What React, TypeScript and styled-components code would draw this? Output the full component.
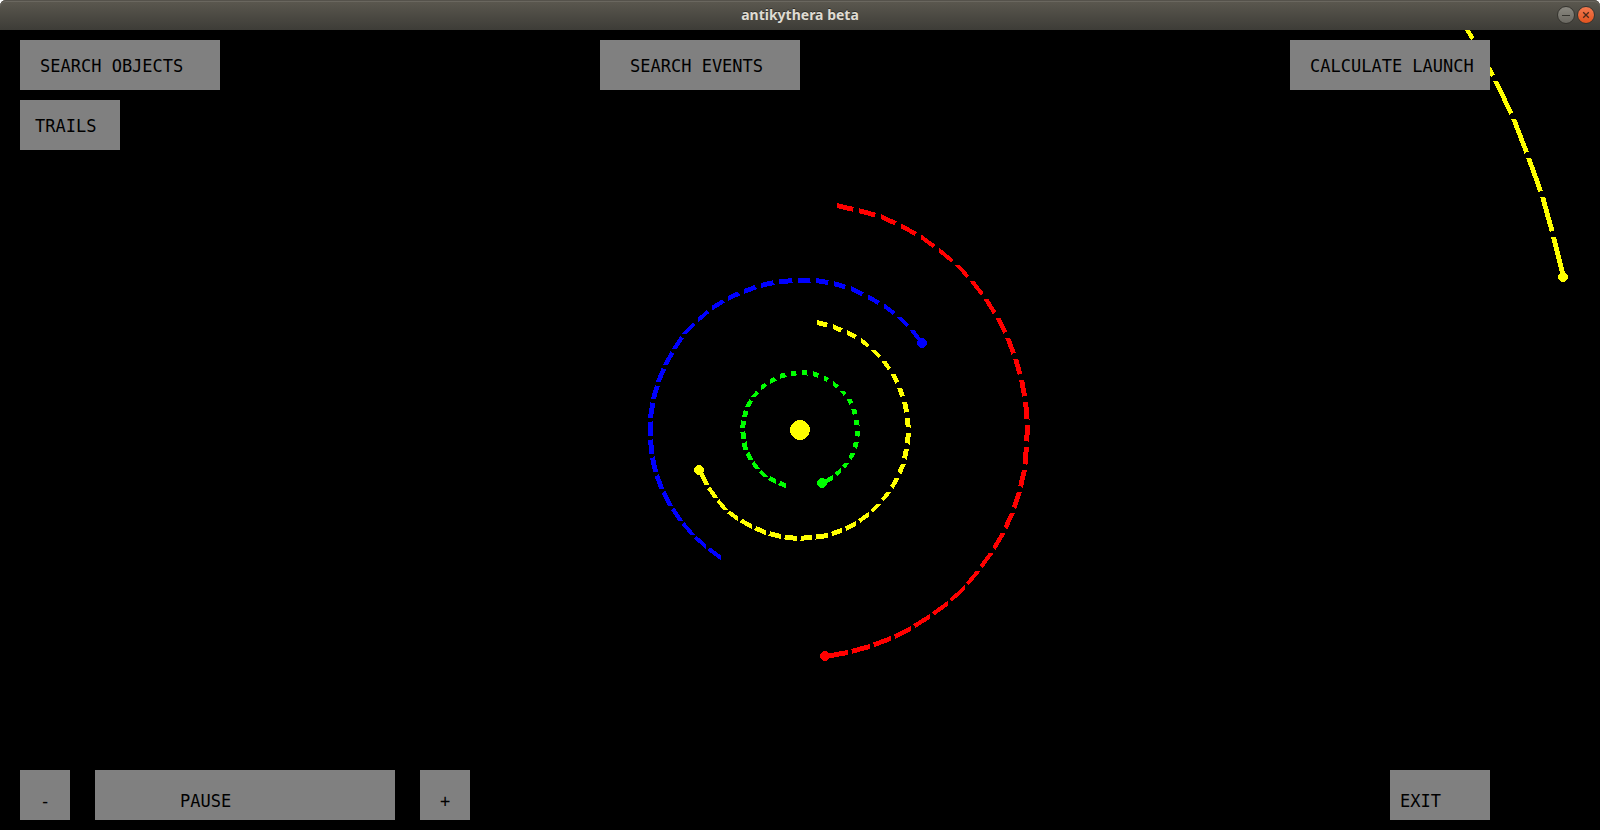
import React from "react";
import styled, { createGlobalStyle } from "styled-components";

const GlobalStyle = createGlobalStyle`
  html, body { margin: 0; background: #fff; }
  * { box-sizing: border-box; }
`;

const Window = styled.div`
  display: flex;
  flex-direction: column;
  min-height: 100vh;
`;

const TitleBar = styled.header`
  display: grid;
  grid-template-columns: 1fr auto 1fr;
  align-items: center;
  height: 30px;
  padding: 0 5px;
  border-radius: 6px 6px 0 0;
  background: linear-gradient(#5c5950, #3d3c37);
  box-shadow: inset 0 1px #55524b, inset 0 2px #6a675f;
`;

const Title = styled.h1`
  grid-column: 2;
  margin: 0;
  font: bold 14px/20px "Noto Sans", sans-serif;
  color: #dfdbd2;
  text-shadow: 0 -1px #2f2e2a;
`;

const WindowControls = styled.div`
  display: flex;
  justify-content: flex-end;
  gap: 2px;
`;

const ControlButton = styled.button<{ $close?: boolean }>`
  display: flex;
  align-items: center;
  justify-content: center;
  width: 18px;
  height: 18px;
  padding: 0;
  border: 1px solid #35342f;
  border-radius: 50%;
  background: ${(p) =>
    p.$close ? "linear-gradient(#f37a50, #e2531f)" : "linear-gradient(#8a8880, #6a6861)"};
`;

const Stage = styled.main`
  position: relative;
  flex: 1;
  display: flex;
  flex-direction: column;
  justify-content: space-between;
  gap: 20px;
  padding: 10px 110px 10px 20px;
  overflow: hidden;
  background: #000;
`;

const Sky = styled.svg`
  position: absolute;
  inset: 0;
  width: 100%;
  height: 100%;
`;

const TopControls = styled.div`
  position: relative;
  display: grid;
  grid-template-columns: 58fr 69fr 200px;
  row-gap: 10px;
`;

const BottomControls = styled.div`
  position: relative;
  display: flex;
  gap: 25px;
`;

const Key = styled.button<{ $width: number; $indent: number; $low?: boolean; $end?: boolean }>`
  width: ${(p) => p.$width}px;
  height: 50px;
  padding: ${(p) => (p.$low ? 21 : 16)}px 0 0 ${(p) => p.$indent}px;
  margin-left: ${(p) => (p.$end ? "auto" : 0)};
  display: flex;
  align-items: flex-start;
  border: 0;
  border-radius: 0;
  background: #808080;
  color: #000;
  font: 17px/20px "DejaVu Sans Mono", monospace;
  white-space: nowrap;
`;

type Point = [number, number];

interface Orbit {
  name: string;
  color: string;
  radius: number;
  from: number;
  to: number;
}

const SUN: Point = [800, 400];
const STEPS = 29;
const STROKE = 5;

// Angles in degrees, counter-clockwise from the positive x axis.
const orbits: Orbit[] = [
  { name: "Mercury", color: "#00ff00", radius: 57.5, from: 255.5, to: -67.2 },
  { name: "Venus", color: "#ffff00", radius: 108.5, from: 81, to: -157.9 },
  { name: "Earth", color: "#0000ff", radius: 150, from: 238, to: 35.2 },
  { name: "Mars", color: "#ff0000", radius: 227.6, from: 80.7, to: -83.5 },
  { name: "Jupiter", color: "#ffff00", radius: 778.3, from: 100.4, to: 11.3 },
];

function trailPoints({ radius, from, to }: Orbit): Point[] {
  return Array.from({ length: STEPS + 1 }, (_, i) => {
    const a = ((from + ((to - from) * i) / STEPS) * Math.PI) / 180;
    return [
      Math.floor(SUN[0] + radius * Math.cos(a)),
      Math.floor(SUN[1] - radius * Math.sin(a)),
    ] as Point;
  });
}

// A thick line whose ends are cut along the axis it runs across.
function segment([x0, y0]: Point, [x1, y1]: Point): string {
  const h = STROKE / 2;
  const wide = Math.abs(x1 - x0) > Math.abs(y1 - y0);
  const [ax, ay, bx, by] = [x0 + 0.5, y0 + 0.5, x1 + 0.5, y1 + 0.5];
  const [ox, oy] = wide ? [0, h] : [h, 0];
  return `${ax - ox},${ay - oy} ${bx - ox},${by - oy} ${bx + ox},${by + oy} ${ax + ox},${ay + oy}`;
}

// Small discs are plotted as a pointed octagon.
function disc([x, y]: Point, r: number): string {
  const d = r * 0.64;
  const corners = [
    [r, -1], [r, 1], [d, d], [1, r], [-1, r], [-d, d],
    [-r, 1], [-r, -1], [-d, -d], [-1, -r], [1, -r], [d, -d],
  ];
  return corners.map(([dx, dy]) => `${x + dx},${y + dy}`).join(" ");
}

function Trail({ orbit }: { orbit: Orbit }) {
  const points = trailPoints(orbit);
  return (
    <g fill={orbit.color}>
      {points.slice(1).map((p, i) => (
        <React.Fragment key={i}>
          <polygon points={segment(points[i], p)} />
          {i < STEPS - 1 && <polygon points={disc(p, 5)} fill="#000" />}
        </React.Fragment>
      ))}
      <polygon points={disc(points[STEPS], 5)} />
    </g>
  );
}

export default function App() {
  return (
    <Window>
      <GlobalStyle />
      <TitleBar>
        <span />
        <Title>antikythera beta</Title>
        <WindowControls>
          <ControlButton aria-label="Minimize">
            <svg width="16" height="16" viewBox="0 0 16 16" stroke="#35342f">
              <path d="M4 8.5h8" />
            </svg>
          </ControlButton>
          <ControlButton $close aria-label="Close">
            <svg width="16" height="16" viewBox="0 0 16 16" stroke="#4a2a1c" strokeWidth="1.3">
              <path d="M5.2 5.2l5.6 5.6M10.8 5.2l-5.6 5.6" />
            </svg>
          </ControlButton>
        </WindowControls>
      </TitleBar>
      <Stage>
        <Sky viewBox="0 0 1600 800" shapeRendering="crispEdges" aria-hidden="true">
          <circle cx={SUN[0]} cy={SUN[1]} r={10} fill="#ffff00" />
          {orbits.map((o) => (
            <Trail key={o.name} orbit={o} />
          ))}
        </Sky>
        <TopControls>
          <Key $width={200} $indent={20}>SEARCH OBJECTS</Key>
          <Key $width={200} $indent={30}>SEARCH EVENTS</Key>
          <Key $width={200} $indent={20}>CALCULATE LAUNCH</Key>
          <Key $width={100} $indent={15}>TRAILS</Key>
        </TopControls>
        <BottomControls>
          <Key $width={50} $indent={20} $low>-</Key>
          <Key $width={300} $indent={85} $low>PAUSE</Key>
          <Key $width={50} $indent={20} $low>+</Key>
          <Key $width={100} $indent={10} $low $end>EXIT</Key>
        </BottomControls>
      </Stage>
    </Window>
  );
}
